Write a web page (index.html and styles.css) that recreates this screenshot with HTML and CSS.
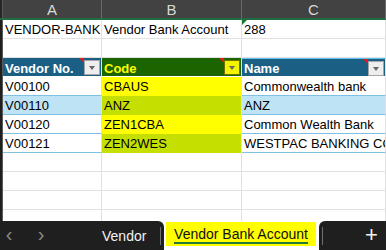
FILE: index.html
```html
<!DOCTYPE html>
<html lang="en">
<head>
  <meta charset="UTF-8">
  <title>Vendor Bank Account</title>
  <link rel="stylesheet" href="styles.css">
</head>
<body>
  <div class="sheet">
    <div class="row colhead">
      <div class="strip"></div>
      <div class="cell">A</div>
      <div class="cell">B</div>
      <div class="cell">C</div>
    </div>
    <div class="row">
      <div class="strip"></div>
      <div class="cell">VENDOR-BANK</div>
      <div class="cell">Vendor Bank Account</div>
      <div class="cell text-num">288</div>
    </div>
    <div class="row">
      <div class="strip"></div>
      <div class="cell"></div>
      <div class="cell"></div>
      <div class="cell"></div>
    </div>
    <div class="row tablehead">
      <div class="strip"></div>
      <div class="cell th">Vendor No.<span class="note"></span><span class="filter"></span></div>
      <div class="cell th th-code">Code<span class="note"></span><span class="filter"></span></div>
      <div class="cell th th-name">Name<span class="note"></span><span class="filter"></span></div>
    </div>
    <div class="row trow">
      <div class="strip"></div>
      <div class="cell">V00100</div>
      <div class="cell code">CBAUS</div>
      <div class="cell">Commonwealth bank</div>
    </div>
    <div class="row trow alt">
      <div class="strip"></div>
      <div class="cell">V00110</div>
      <div class="cell code green">ANZ</div>
      <div class="cell">ANZ</div>
    </div>
    <div class="row trow">
      <div class="strip"></div>
      <div class="cell">V00120</div>
      <div class="cell code">ZEN1CBA</div>
      <div class="cell">Common Wealth Bank</div>
    </div>
    <div class="row trow">
      <div class="strip"></div>
      <div class="cell">V00121</div>
      <div class="cell code green">ZEN2WES</div>
      <div class="cell">WESTPAC BANKING COR</div>
    </div>
    <div class="row"><div class="strip"></div><div class="cell"></div><div class="cell"></div><div class="cell"></div></div>
    <div class="row"><div class="strip"></div><div class="cell"></div><div class="cell"></div><div class="cell"></div></div>
    <div class="row"><div class="strip"></div><div class="cell"></div><div class="cell"></div><div class="cell"></div></div>
    <div class="row"><div class="strip"></div><div class="cell"></div><div class="cell"></div><div class="cell"></div></div>
  </div>

  <div class="tabs">
    <div class="tabs-left">
      <span class="arrow">&lsaquo;</span>
      <span class="arrow">&rsaquo;</span>
      <span class="tab">Vendor</span>
      <span class="sep"></span>
    </div>
    <div class="tab-active"><span>Vendor Bank Account</span></div>
    <div class="tabs-right">
      <span class="sep"></span>
      <span class="plus">+</span>
    </div>
  </div>
</body>
</html>
```

FILE: styles.css
```css
html, body {
  margin: 0;
  height: 100%;
}
body {
  width: 386px;
  height: 250px;
  overflow: hidden;
  display: flex;
  flex-direction: column;
  background: #fff;
  font-family: "Liberation Sans", Arial, sans-serif;
  font-size: 13px;
  color: #000;
}
.sheet {
  flex: 1;
  overflow: hidden;
}
.row {
  display: grid;
  grid-template-columns: 3px 99px 140px 144px;
  height: 19px;
}
.strip {
  background: #1f1f1f;
  border-right: 1px solid #5a5a5a;
  box-sizing: border-box;
}
.cell {
  position: relative;
  box-sizing: border-box;
  border-right: 1px solid #e1e1e1;
  border-bottom: 1px solid #e1e1e1;
  padding: 2px 0 0 2px;
  line-height: 15px;
  white-space: nowrap;
  overflow: hidden;
}

/* column letters */
.colhead {
  height: 20px;
}
.colhead .strip {
  background: #262626;
  border-bottom: 2px solid #1f6e43;
}
.colhead .cell {
  background: #424242;
  color: #d8d8d8;
  font-size: 15px;
  text-align: center;
  padding: 2px 0 0;
  border-right: 1px solid #6a6a6a;
  border-bottom: 2px solid #1f6e43;
}

.text-num::before {
  content: "";
  position: absolute;
  top: 0;
  left: 0;
  border-top: 5px solid #1c7a2a;
  border-right: 5px solid transparent;
}

/* table header */
.th {
  background: #1c5f84;
  color: #fff;
  font-weight: bold;
  padding-top: 3px;
  border-bottom: 1px solid #fff;
}
.th-code {
  background: #1b6400;
  color: #ffff00;
  border-right-color: #ffff00;
}
.th-name {
  border-top: 1px solid #5ec3ee;
  padding-top: 2px;
}
.note {
  position: absolute;
  top: 0;
  right: 17px;
  border-top: 5px solid #e21b1b;
  border-left: 5px solid transparent;
}
.filter {
  position: absolute;
  right: 1px;
  top: 2px;
  width: 16px;
  height: 15px;
  box-sizing: border-box;
  background: #eeeeee;
  border: 1px solid #a5a5a5;
}
.filter::after {
  content: "";
  position: absolute;
  left: 4px;
  top: 5px;
  border-top: 4px solid #666;
  border-left: 3.5px solid transparent;
  border-right: 3.5px solid transparent;
}
.th-code .filter {
  background: #f4f400;
  border-color: #707000;
}

/* table body */
.trow .cell {
  border-bottom: 1px solid #7fc1e4;
}
.trow.alt .cell {
  background: #bee3f4;
}
.trow .code {
  background: #ffff00;
  border-bottom: none;
}
.trow .code.green {
  background: #c5e000;
}

/* sheet tabs */
.tabs {
  height: 29px;
  display: flex;
  background: #fff;
  font-size: 14px;
}
.tabs-left {
  width: 164px;
  background: #1f1f1f;
  border-top-right-radius: 6px;
  display: flex;
  align-items: center;
  color: #8a8a8a;
}
.arrow {
  font-size: 20px;
  width: 32px;
  text-align: center;
  margin-top: -3px;
}
.arrow:first-child {
  margin-left: -7px;
}
.tab {
  color: #f2f2f2;
  margin-left: 45px;
}
.sep {
  width: 1px;
  height: 18px;
  background: #6e6e6e;
  margin-left: 14px;
}
.tab-active {
  width: 150px;
  margin: 1px 3px 0 2px;
  height: 24px;
  background: #ffff00;
  display: flex;
  justify-content: center;
  color: #111;
}
.tab-active span {
  height: 20px;
  padding-top: 1px;
  box-sizing: border-box;
  border-bottom: 2px solid #1f7a34;
  line-height: 18px;
  margin-top: 2px;
}
.tabs-right {
  flex: 1;
  background: #1f1f1f;
  border-top-left-radius: 6px;
  display: flex;
  align-items: center;
}
.tabs-right .sep {
  margin-left: 3px;
}
.plus {
  color: #f2f2f2;
  font-size: 22px;
  margin-left: 42px;
  margin-top: -2px;
}
```
